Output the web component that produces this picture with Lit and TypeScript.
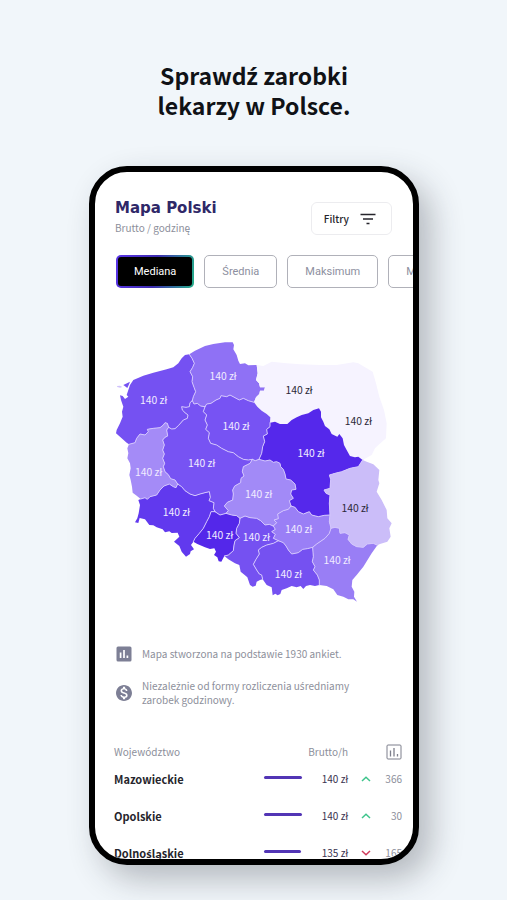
import { LitElement, html, svg, css } from "lit";
import { customElement, state } from "lit/decorators.js";

/* Borders between provinces, each stored once and shared by both neighbours. */
const EDGES: Record<string, string> = {
  zpCoast: "57,343 50,338 35,325 18,310 20,300 30,280 38,260 36,245 40,230 33,210 30,196 38,198 45,207 55,200 50,195 55,180 60,165 70,150 100,137 130,128 170,118 190,112 205,100 215,85 225,75 238,73",
  zpPom: "238,73 246,85 253,100 248,112 240,125 248,140 246,155 252,172 257,185 250,200 247,212",
  pomWlk: "247,212 252,222 262,220 272,228 285,230",
  pomKuj: "285,230 290,222 303,220 318,210 330,205 333,197 350,200 360,195 375,203 388,210 400,205 415,212 432,217",
  pomCoast: "238,73 255,62 285,48 310,42 345,37 368,37 372,45 370,58 380,75 385,92 390,102 405,100 415,106 440,105",
  pomNe: "432,217 438,202 448,192 450,182 462,182 465,172 450,172 447,160 438,150 443,130 440,105",
  zpLub: "57,343 75,338 80,325 90,312 105,315 115,305 112,298 130,295 150,293 160,285 165,278 172,280 176,292",
  zpWlk: "176,292 185,297 195,296 205,287 220,270 232,265 234,255 225,248 217,240 215,230 228,232 238,230 240,218 247,212",
  lubWlk: "176,292 170,300 173,318 165,322 158,330 163,345 158,360 163,372 158,385 164,400 160,410 165,425 175,434 182,446 195,450 203,462",
  lubWest: "57,343 52,355 55,370 52,385 60,400 62,415 58,435 62,450 66,470 68,488 80,497 92,507",
  lubDol: "203,462 198,473 190,470 178,462 162,468 150,480 140,495 120,500 112,508 105,503 92,507",
  dolWlk: "203,462 215,470 225,482 240,492 255,497 270,492 285,488 298,485 301,502 297,512 312,518 310,535 315,545",
  dolOpo: "315,545 303,545 298,560 290,575 280,595 268,610 255,625 250,635",
  dolSouth: "92,507 85,510 90,525 86,550 82,565 75,577 85,579 89,564 105,568 118,585 130,586 140,592 158,598 165,607 178,604 185,609 203,608 208,620 192,635 208,648 215,665 228,680 240,672 242,664 252,658 243,645 250,635",
  opoWlk: "315,545 330,555 348,550",
  opoLod: "348,550 365,555 380,557 390,565",
  wlkLod: "348,550 355,542 343,528 352,517 368,510 370,492 368,480 374,468 392,458 393,445 402,438 397,425 400,410 412,404 420,400 427,388",
  opoSla: "390,565 388,580 380,595 378,610 388,623 375,632 372,645 370,662 355,675 343,678",
  opoSouth: "250,635 262,642 285,652 300,657 313,655 318,665 312,675 322,682 326,694 334,695 343,678",
  lodSla: "390,565 405,558 420,563 440,565 452,572 465,585 478,583 490,588",
  lodSwi: "490,588 500,578 492,570 505,566 503,552 520,542 535,538 543,528",
  lodMaz: "543,528 538,512 550,505 542,492 545,480 558,478 555,462 542,450 528,447 525,432 520,418 512,410 510,400 500,395 490,397 480,390 465,393 447,388",
  lodKuj: "427,388 436,392 447,388",
  kujWlk: "285,230 280,245 290,255 285,270 292,285 287,298 298,308 295,325 302,340 320,345 335,355 355,365 370,368 385,380 400,388 415,390 427,388",
  kujMaz: "447,388 455,370 458,350 464,335 460,318 472,312 470,298 480,290 480,278",
  kujNe: "432,217 442,230 455,242 470,252 481,262 480,278",
  neMaz: "480,278 495,275 510,282 532,282 545,270 560,262 575,255 595,250 610,240 627,235 633,245 633,262 640,275 645,288 658,298 665,312 682,320 688,312 698,325 702,345 710,360 720,378 735,382 745,380 758,390",
  neOuter: "440,105 460,108 485,95 530,100 570,103 630,105 680,105 730,97 745,100 765,112 788,125 798,160 808,200 822,240 830,280 828,325 805,345 795,355 785,375 758,390",
  mazLbl: "758,390 745,410 720,415 695,425 675,430 658,435 662,448 660,475 642,480 648,490 660,495 658,520 660,555",
  mazSwi: "543,528 555,532 565,545 580,552 598,545 605,555 625,560 643,556 660,555",
  swiLbl: "660,555 658,575 663,595",
  lblEast: "758,390 770,395 790,403 808,420 805,450 808,460 800,485 815,510 830,540 832,565 845,580 838,595 842,620 832,635 810,642 802,646",
  lblPod: "663,595 675,592 688,595 690,610 705,608 718,615 714,628 725,642 740,650 760,652 772,642 790,640 802,646",
  podOuter: "802,646 785,670 760,710 740,735 727,750 725,770 733,785 732,800 741,815 730,808 715,808 700,800 682,795 670,778 650,768 628,765",
  podMal: "628,765 628,750 622,735 610,720 615,710 607,695 610,680 608,652",
  swiPod: "608,652 620,642 645,625 658,610 663,595",
  swiSla: "490,588 496,598 485,605 496,613 490,625 505,632",
  swiMal: "505,632 520,638 528,648 535,660 545,672 565,668 578,658 592,656 608,652",
  slaMal: "505,632 490,640 470,645 455,652 445,660 448,672 438,688 430,703 440,720 448,732 455,735 458,748",
  malSouth: "458,748 470,765 485,772 488,796 496,791 503,796 511,792 515,780 530,775 545,768 560,772 572,768 580,777 588,768 600,765 615,768 628,765",
  slaSouth: "343,678 355,688 375,700 388,705 392,725 404,735 412,742 420,765 428,770 437,767 440,755 450,750 458,748",
};

interface Region {
  name: string;
  fill: string;
  ring: string[];
  at: [number, number];
  dark?: boolean;
}

/* A leading "-" walks the border backwards. */
const REGIONS: Region[] = [
  { name: "Zachodniopomorskie", fill: "#7551f2", ring: ["zpCoast", "zpPom", "-zpWlk", "-zpLub"], at: [131, 213] },
  { name: "Pomorskie", fill: "#8f71f5", ring: ["pomCoast", "-pomNe", "-pomKuj", "-pomWlk", "-zpPom"], at: [339, 140] },
  { name: "Warmińsko-mazurskie", fill: "#f6f3ff", ring: ["neOuter", "-neMaz", "-kujNe", "pomNe"], at: [567, 182], dark: true },
  { name: "Kujawsko-pomorskie", fill: "#7753f3", ring: ["pomKuj", "kujNe", "-kujMaz", "-lodKuj", "-kujWlk"], at: [378, 289] },
  { name: "Wielkopolskie", fill: "#7753f3", ring: ["zpWlk", "pomWlk", "kujWlk", "-wlkLod", "-opoWlk", "-dolWlk", "-lubWlk"], at: [275, 402] },
  { name: "Lubuskie", fill: "#a48bf7", ring: ["zpLub", "lubWlk", "lubDol", "-lubWest"], at: [116, 427] },
  { name: "Dolnośląskie", fill: "#6139ee", ring: ["dolWlk", "dolOpo", "-dolSouth", "-lubDol"], at: [199, 548] },
  { name: "Opolskie", fill: "#5427ea", ring: ["opoWlk", "opoLod", "opoSla", "-opoSouth", "-dolOpo"], at: [329, 616] },
  { name: "Śląskie", fill: "#7551f1", ring: ["lodSla", "swiSla", "slaMal", "-slaSouth", "-opoSla"], at: [439, 624] },
  { name: "Łódzkie", fill: "#a28af7", ring: ["lodKuj", "-lodMaz", "-lodSwi", "-lodSla", "-opoLod", "wlkLod"], at: [446, 494] },
  { name: "Mazowieckie", fill: "#5528eb", ring: ["kujMaz", "neMaz", "mazLbl", "-mazSwi", "lodMaz"], at: [603, 372] },
  { name: "Świętokrzyskie", fill: "#9a7ff6", ring: ["mazSwi", "swiLbl", "-swiPod", "-swiMal", "-swiSla", "lodSwi"], at: [566, 600] },
  { name: "Małopolskie", fill: "#7551f1", ring: ["swiMal", "-podMal", "-malSouth", "-slaMal"], at: [535, 734] },
  { name: "Podkarpackie", fill: "#997ef5", ring: ["lblPod", "podOuter", "podMal", "swiPod"], at: [681, 692] },
  { name: "Lubelskie", fill: "#cbbdf9", ring: ["lblEast", "-lblPod", "-swiLbl", "-mazLbl"], at: [735, 536], dark: true },
];

const OUTER = ["zpCoast", "pomCoast", "pomNe", "kujNe", "lubWest", "dolSouth", "opoSouth", "neOuter", "neMaz", "lblEast", "podOuter", "malSouth", "slaSouth"];

const outline = (ring: string[]) =>
  "M" +
  ring
    .map((key) => (key[0] === "-" ? EDGES[key.slice(1)].split(" ").reverse().join(" ") : EDGES[key]))
    .join(" ") +
  "Z";

const pl = (text: string) =>
  text.split(/([źżśŹŻŚ])/).map((part, i) => (i % 2 ? html`<span class="accented">${part}</span>` : part));

@customElement("poland-map")
export class PolandMap extends LitElement {
  static styles = css`
    :host { display: block; }
    svg { display: block; width: 100%; height: auto; }
    .border { fill: none; stroke: #d3c5fd; stroke-width: 3; stroke-linejoin: round; stroke-linecap: round; }
    .value { font: 400 31px "Noto Sans CJK SC", "Noto Sans", sans-serif; fill: #f1ecff; text-anchor: middle; }
    .dark { fill: #2b2838; }
  `;

  render() {
    return html`<svg viewBox="0 0 870 840" role="img" aria-label="Mapa Polski">
      <path d="M40,165 L60,155 57,163 52,174 44,168Z" fill="#7551f2"></path>
      <path d="M21,168 L30,167 37,171 30,173 22,171Z" fill="#cfc2fb"></path>
      ${REGIONS.map((r) => svg`<path d=${outline(r.ring)} fill=${r.fill}></path>`)}
      ${Object.entries(EDGES)
        .filter(([key]) => !OUTER.includes(key))
        .map(([, points]) => svg`<polyline class="border" points=${points}></polyline>`)}
      ${REGIONS.map((r) => svg`<text class="value ${r.dark ? "dark" : ""}" x=${r.at[0]} y=${r.at[1] + 10}>140 zł</text>`)}
      <text class="value dark" x="745" y="286">140 zł</text>
    </svg>`;
  }
}

@customElement("app-root")
export class AppRoot extends LitElement {
  static styles = css`
    :host {
      display: block;
      font-family: "Noto Sans CJK SC", "Noto Sans", sans-serif;
      color: #26252c;
    }
    * { box-sizing: border-box; }
    .accented { font-family: "Noto Sans", sans-serif; line-height: 1; }
    .page {
      display: flex;
      flex-direction: column;
      height: 100vh;
      padding: 60px 88px 35px 89px;
      background: #f1f6fa;
      overflow: hidden;
    }
    .headline {
      margin: 0 0 46px;
      font-size: 23px;
      font-weight: 700;
      line-height: 30px;
      text-align: center;
      color: #101216;
    }
    .phone {
      flex: 1;
      min-height: 0;
      overflow: hidden;
      border: 6px solid #000;
      border-radius: 38px;
      background: #fff;
      box-shadow: 12px 14px 32px rgba(40, 42, 54, 0.3);
    }
    .top {
      display: flex;
      justify-content: space-between;
      align-items: flex-start;
      padding: 28px 21px 0 20px;
    }
    .title {
      margin: 0;
      font: 700 15px/16px "DejaVu Sans", sans-serif;
      color: #2f2868;
    }
    .subtitle {
      margin: 4px 0 0;
      font-size: 10px;
      line-height: 16px;
      color: #8d8f9b;
    }
    button { font-family: inherit; cursor: pointer; }
    .filter {
      display: flex;
      align-items: center;
      gap: 11px;
      height: 33px;
      margin-top: 2px;
      padding: 0 15px 0 12px;
      border: 1px solid #ececef;
      border-radius: 6px;
      background: #fff;
      font-size: 10px;
      font-weight: 500;
      color: #26252c;
    }
    .tabs {
      display: flex;
      gap: 10px;
      padding: 19px 0 0 21px;
      overflow: hidden;
    }
    .tab {
      flex: none;
      height: 33px;
      padding: 0 17px;
      border: 1px solid #b0b1b9;
      border-radius: 5px;
      background: #fff;
      font: 400 11px/16px Roboto, sans-serif;
      color: #8d8fa0;
    }
    .active {
      padding: 0 16px;
      border: 2px solid transparent;
      background: linear-gradient(#000, #000) padding-box,
        linear-gradient(100deg, #5a35e8 0%, #3d2bb0 50%, #25b08a 100%) border-box;
      color: #fff;
    }
    .map { padding: 42px 13px 0 15px; }
    .notes {
      display: grid;
      gap: 17px;
      margin: 0;
      padding: 36px 21px 0;
      list-style: none;
      font-size: 10px;
      line-height: 14px;
      color: #8d8f9b;
    }
    .note { display: flex; align-items: center; gap: 10px; }
    .note svg { flex: none; }
    table {
      width: calc(100% - 30px);
      margin: 37px 11px 0 19px;
      border-collapse: collapse;
      table-layout: fixed;
      font-size: 10px;
      line-height: 16px;
    }
    th, td { padding: 0; text-align: right; vertical-align: middle; white-space: nowrap; }
    thead th { height: 16px; font-weight: 400; color: #8d8f9b; }
    tbody th { font-size: 11px; font-weight: 700; }
    tbody tr { height: 37px; }
    th.name { text-align: left; }
    .col-bar { width: 39px; }
    .col-pay { width: 45px; }
    .col-trend { width: 24px; }
    .col-count { width: 30px; }
    .pay { color: #39334f; }
    .count { color: #8d8f9b; }
    .bar { height: 3px; margin-bottom: 2px; border-radius: 2px; background: #5235b5; }
    table svg { display: block; margin-left: auto; }
  `;

  @state() private selected = "Mediana";

  private tabs = ["Mediana", "Średnia", "Maksimum", "Minimum"];

  private rows = [
    { name: "Mazowieckie", pay: 140, up: true, count: 366 },
    { name: "Opolskie", pay: 140, up: true, count: 30 },
    { name: "Dolnośląskie", pay: 135, up: false, count: 165 },
  ];

  render() {
    return html`<main class="page">
      <h1 class="headline">${pl("Sprawdź zarobki")}<br />lekarzy w Polsce.</h1>
      <section class="phone">
        <header class="top">
          <div>
            <h2 class="title">Mapa Polski</h2>
            <p class="subtitle">Brutto / godzinę</p>
          </div>
          <button class="filter" type="button">
            Filtry
            <svg width="16" height="12" viewBox="0 0 16 12" fill="none" stroke="#26252c" stroke-width="1.700">
              <path d="M0.500 1.500H15.500M3 6H13M6.500 10.500H9.500"></path>
            </svg>
          </button>
        </header>
        <nav class="tabs">
          ${this.tabs.map(
            (t) => html`<button
              type="button"
              class="tab ${t === this.selected ? "active" : ""}"
              @click=${() => (this.selected = t)}
            >${t}</button>`
          )}
        </nav>
        <div class="map"><poland-map></poland-map></div>
        <ul class="notes">
          <li class="note">
            <svg width="16" height="16" viewBox="0 0 16 16">
              <rect x="0.5" y="0.5" width="15" height="15" rx="1.5" fill="#7d7f95"></rect>
              <path d="M4.6 6.5V12M8 4V12M11.4 9.5V12" stroke="#fff" stroke-width="1.7"></path>
            </svg>
            <span>Mapa stworzona na podstawie 1930 ankiet.</span>
          </li>
          <li class="note">
            <svg width="16" height="16" viewBox="0 0 24 24" fill="#7d7f95">
              <path d="M12 0C5.4 0 0 5.4 0 12s5.4 12 12 12 12-5.4 12-12S18.600 0 12 0zm1.700 19.300V21.500h-3.200v-2.250c-2.050-.43-3.800-1.750-3.930-4.070h2.350c.12 1.250.98 2.230 3.160 2.230 2.340 0 2.860-1.170 2.860-1.900 0-.98-.53-1.920-3.180-2.550-2.950-.71-4.970-1.930-4.970-4.370 0-2.040 1.650-3.370 3.700-3.810V2.500h3.200v2.300c2.220.54 3.340 2.220 3.410 4.050h-2.350c-.06-1.330-.77-2.230-2.660-2.230-1.800 0-2.880.82-2.880 1.970 0 1.010.78 1.670 3.200 2.300 2.420.62 5.010 1.660 5.010 4.680-.01 2.180-1.650 3.390-3.720 3.730z"></path>
            </svg>
            <span>${pl("Niezależnie od formy rozliczenia uśredniamy")}<br />zarobek godzinowy.</span>
          </li>
        </ul>
        <table>
          <colgroup>
            <col /><col class="col-bar" /><col class="col-pay" /><col class="col-trend" /><col class="col-count" />
          </colgroup>
          <thead>
            <tr>
              <th class="name" scope="col">Województwo</th>
              <th scope="col" colspan="2">Brutto/h</th>
              <th scope="col" colspan="2" aria-label="Liczba ankiet">
                <svg width="16" height="16" viewBox="0 0 16 16" fill="none" stroke="#7d7f8c">
                  <rect x="1" y="1" width="14" height="14" rx="1"></rect>
                  <path d="M4.500 6.500V12.500M8 4V12.500M11.500 10V12.500" stroke-width="1.300"></path>
                </svg>
              </th>
            </tr>
          </thead>
          <tbody>
            ${this.rows.map(
              (r) => html`<tr>
                <th class="name" scope="row">${pl(r.name)}</th>
                <td><div class="bar" style="width:${Math.round((r.pay / 140) * 38)}px"></div></td>
                <td class="pay">${r.pay} zł</td>
                <td>
                  <svg width="12" height="8" viewBox="0 0 12 8" fill="none" stroke-width="1.500" stroke=${r.up ? "#3fc48c" : "#cf3d5c"}>
                    <path d=${r.up ? "M2 6L6 2.200L10 6" : "M2 2L6 5.800L10 2"}></path>
                  </svg>
                </td>
                <td class="count">${r.count}</td>
              </tr>`
            )}
          </tbody>
        </table>
      </section>
    </main>`;
  }
}
